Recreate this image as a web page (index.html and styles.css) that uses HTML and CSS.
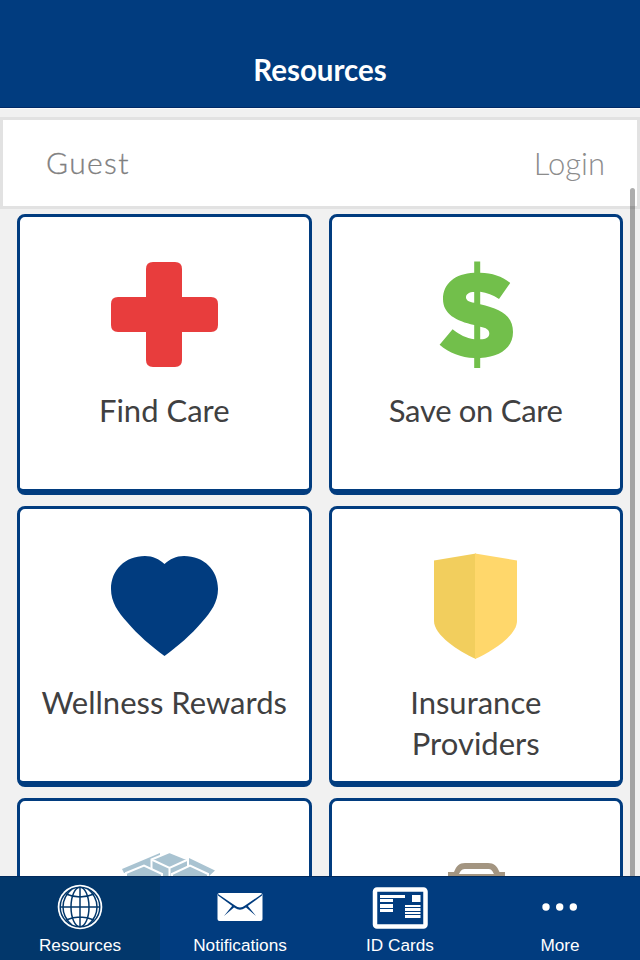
FILE: index.html
```html
<!DOCTYPE html>
<html lang="en">
<head>
  <meta charset="UTF-8" />
  <meta name="viewport" content="width=device-width, initial-scale=1.0" />
  <title>Resources</title>
  <link rel="stylesheet" href="styles.css">
</head>
<body>

  <header class="navbar">
    <h1>Resources</h1>
  </header>

  <main class="content">
    <div class="account-bar">
      <span class="account-name">Guest</span>
      <a class="login-link" href="#">Login</a>
    </div>

    <section class="card-grid">
      <div class="card">
        <svg class="card-icon" viewBox="0 0 108 108">
          <path fill="#e83d3d" d="M43 1h22q7 0 7 7v28h29q7 0 7 7v21q0 7-7 7H72v28q0 7-7 7H43q-7 0-7-7V71H8q-7 0-7-7V43q0-7 7-7h28V8q0-7 7-7z" />
        </svg>
        <h2>Find Care</h2>
      </div>

      <div class="card">
        <svg class="card-icon" viewBox="0 0 108 108">
          <path fill="#72bf4b" fill-rule="evenodd" d="M52.200 .5h6v11.200c12 .3 22 3.500 30 10.300L77 38c-6-4-12-6.500-18.800-7.300v12.600C78 48 91 54 91 71c0 15-12 25-32.800 26v10h-6V97c-13-.5-25-5-34.600-13.300l13-15.400c7 5.500 13.600 9 21.600 10V64C34 60 21 53 21 38c0-15.500 12-25.500 31.200-26.300zM52.200 31c-5 0-8.200 2-8.200 5.200s3.200 4.800 8.200 5.500zM58.200 65.700v12.600c6 0 9.100-2 9.100-5.800 0-3.500-3.100-6-9.100-6.800z" />
        </svg>
        <h2 class="tight">Save on Care</h2>
      </div>

      <div class="card">
        <svg class="card-icon" viewBox="0 0 108 108">
          <path fill="#013c7f" d="M54.500 11C49 6 43 3 35 3 15 3 1 17 1 36c0 13 7 23 16 33 11 13 24 24 37.500 34C68 93 81 82 92 69c9-10 16-20 16-33C108 17 94 3 74 3c-8 0-14 3-19.500 8z" />
        </svg>
        <h2>Wellness Rewards</h2>
      </div>

      <div class="card">
        <svg class="card-icon" viewBox="0 0 108 108">
          <path fill="#f2ce5d" d="M12 7.500L54 .5V106C36 98 12 82 12 68z" />
          <path fill="#ffd76b" d="M53 .5l42 7V68c0 14-24 30-42 38z" />
        </svg>
        <h2>Insurance Providers</h2>
      </div>

      <div class="card">
        <svg class="card-icon" viewBox="0 0 108 108">
          <path fill="#a9c3d1" d="M12 24L50 8v20H14zM79 13l26 12.500-7 6.500H79z" />
          <g fill="#a9c3d1" stroke="#fff" stroke-width="2">
            <path d="M41.500 14.500L59.500 7 78 14.500V32H41.500z" />
            <path d="M41.500 14.500l18 8.500L78 14.500M59.500 23v17" />
            <path d="M16 28l18-7.500L52 29v30H16zM62 29l18-8.500L98 29v30H62z" />
          </g>
        </svg>
      </div>

      <div class="card">
        <svg class="card-icon" viewBox="0 0 108 108">
          <path fill="#a39581" fill-rule="evenodd" d="M26 27h6c2.500-6 5-9 11-9h23c6 0 9 3 11.500 9H83v30H26zM37 29h35c-2-4-3-5-6-5H44c-4 0-5 1-7 5z" />
        </svg>
      </div>
    </section>

    <div class="scrollbar"></div>
  </main>

  <nav class="tabs">
    <a class="tab active" href="#">
      <svg class="tab-icon" width="46" height="46" viewBox="0 0 46 46">
        <circle cx="23" cy="23" r="22.300" fill="#fff" />
        <g fill="none" stroke="#02376b" stroke-width="1.500">
          <circle cx="23" cy="23" r="19.800" />
          <path d="M15 5C3 15 3 31 15 41M31 5c12 10 12 26 0 36" />
          <ellipse cx="23" cy="23" rx="9" ry="19.800" />
          <path d="M23 3v40M3 23h40M9 10q14 6 28 0M9 36q14-6 28 0" />
        </g>
      </svg>
      <span>Resources</span>
    </a>
    <a class="tab" href="#">
      <svg class="tab-icon" width="46" height="46" viewBox="0 0 46 46">
        <rect x=".5" y="9" width="45" height="28" rx="2" fill="#fff" />
        <path fill="#013c7f" d="M1 10l17 11.500q5 4 10 0L45 10v1.500L28 24q-5 3.500-10 0L1 11.500z" />
        <path fill="#013c7f" d="M15.500 21.500l2 1.500L7 32zM30.500 21.500l-2 1.500L39 32z" />
      </svg>
      <span>Notifications</span>
    </a>
    <a class="tab" href="#">
      <svg class="tab-icon" width="56" height="46" viewBox="0 0 56 46">
        <rect x="3" y="5.500" width="50.500" height="37" rx="2" fill="none" stroke="#fff" stroke-width="4.500" />
        <path fill="#fff" d="M8 11h25v3H8zM8 15h13v3H8zM8 20h13v4H8zM8 25h13v3H8zM40 11h8.500v7H40zM33 21h15.500v2H33zM33 24h15.500v3H33zM33 28h15.500v2H33zM33 31h15.500v3H33z" />
      </svg>
      <span>ID Cards</span>
    </a>
    <a class="tab" href="#">
      <svg class="tab-icon" width="46" height="46" viewBox="0 0 46 46">
        <g fill="#fff">
          <circle cx="9" cy="23" r="3.700" />
          <circle cx="22.700" cy="23" r="3.700" />
          <circle cx="36.300" cy="23" r="3.700" />
        </g>
      </svg>
      <span>More</span>
    </a>
  </nav>

</body>
</html>
```

FILE: styles.css
```css
/* General Body and Layout */
* {
  box-sizing: border-box;
}

body {
  font-family: Lato, sans-serif;
  margin: 0;
  height: 960px;
  display: flex;
  flex-direction: column;
  overflow: hidden;
  background-color: #f1f1f1;
}

.navbar {
  flex: none;
  height: 108px;
  padding-top: 32px;
  background-color: #013c7f;
  border-bottom: 1px solid #012a66;
  display: flex;
  justify-content: center;
  align-items: center;
}

.navbar h1 {
  margin: 0;
  font-size: 29.5px;
  font-weight: 700;
  color: white;
}

.content {
  position: relative;
  flex: 1;
  min-height: 0;
  overflow: hidden;
  padding-top: 9px;
  border-top: 1px solid #fbfbfb;
}

/* Account Bar */
.account-bar {
  height: 92px;
  margin-top: -1px;
  padding: 0 32px 0 43px;
  background-color: white;
  border: 3px solid #e2e2e2;
  display: flex;
  justify-content: space-between;
  align-items: center;
  font-size: 31px;
  font-weight: 300;
}

.account-name {
  margin-top: -2px;
  font-size: 30px;
  letter-spacing: 1.4px;
  color: #808080;
  -webkit-text-stroke: 0.3px #808080;
}

.login-link {
  color: #8c8c8c;
  text-decoration: none;
}

/* Cards */
.card-grid {
  display: grid;
  grid-template-columns: 1fr 1fr;
  grid-auto-rows: 281px;
  gap: 11px 17px;
  padding: 5px 17px 0;
}

.card {
  background-color: white;
  border: 3px solid #013c7f;
  border-bottom-width: 6px;
  border-radius: 8px;
  padding: 44px 15px 0;
  text-align: center;
}

.card-icon {
  display: block;
  width: 108px;
  height: 108px;
  margin: 0 auto;
}

.card h2 {
  margin: 21px 0 0;
  font-size: 31px;
  font-weight: 400;
  line-height: 41px;
  color: #404041;
}

.card h2.tight {
  letter-spacing: -0.3px;
}

/* Scroll indicator lies over the cards */
.scrollbar {
  position: absolute;
  top: 79px;
  right: 5px;
  bottom: -10px;
  width: 5px;
  border-radius: 3px;
  background-color: rgba(0, 0, 0, 0.32);
}

/* Bottom Tabs */
.tabs {
  flex: none;
  height: 84px;
  display: flex;
  background-color: #013c7f;
}

.tab {
  flex: 1;
  display: flex;
  flex-direction: column;
  align-items: center;
  padding-top: 7px;
  border-top: 1px solid #012a5c;
  font-family: "Liberation Sans", Arial, sans-serif;
  font-size: 17.2px;
  line-height: 20px;
  color: white;
  text-decoration: none;
}

.tab.active {
  background-color: #02376b;
}

.tab span {
  margin-top: 5px;
}
```
